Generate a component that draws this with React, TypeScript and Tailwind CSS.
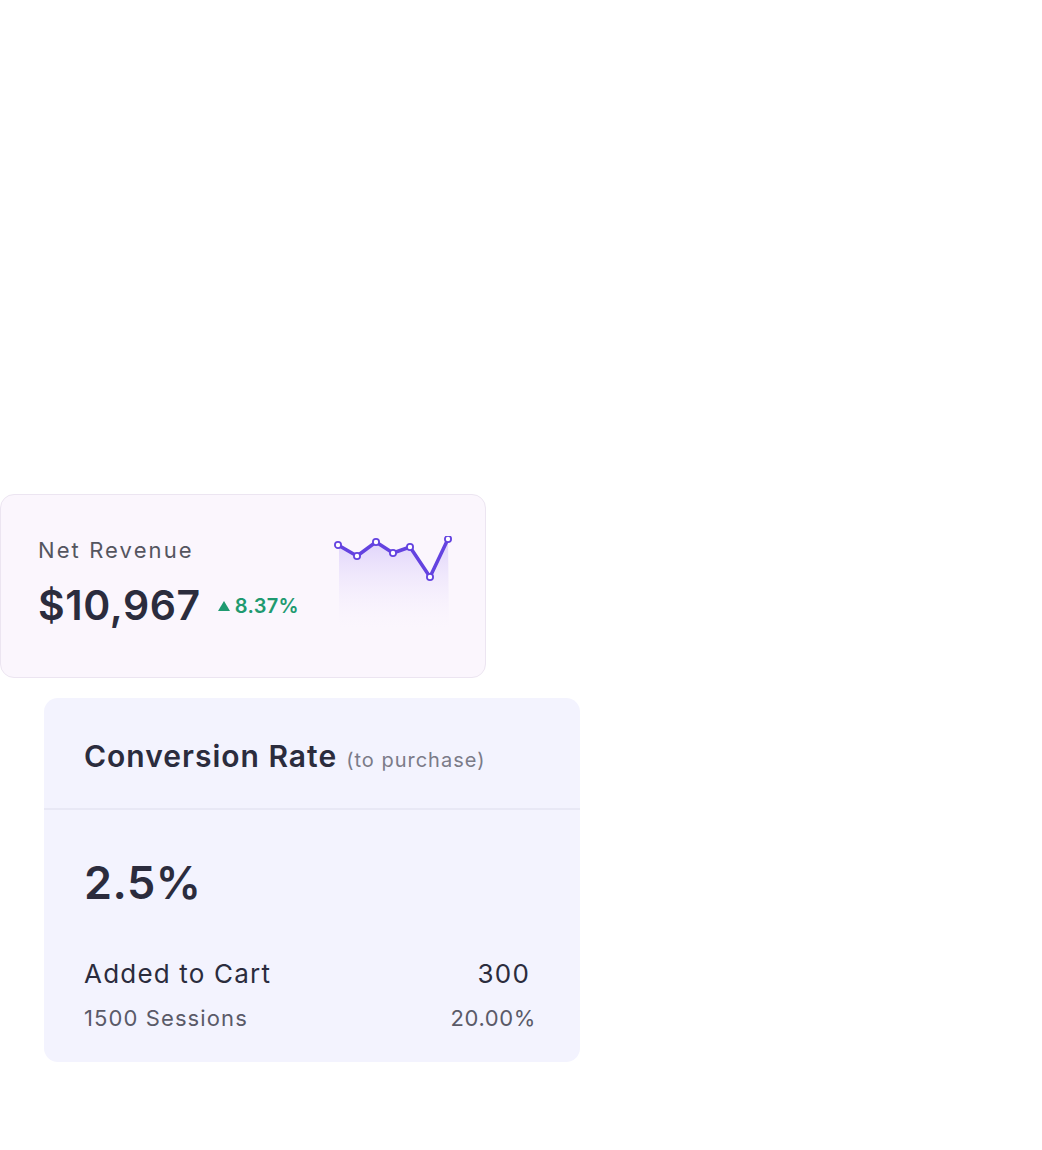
import React from "react";

const points: [number, number][] = [
  [5, 9],
  [24, 20],
  [43, 6],
  [60, 17],
  [77, 11],
  [97, 41],
  [115, 3],
];

function Sparkline() {
  const line = points.map(([x, y], i) => `${i === 0 ? "M" : "L"}${x} ${y}`).join(" ");
  const area = `M6 9 ${points.map(([x, y]) => `L${x} ${y}`).join(" ")} L116 92 L6 92 Z`;
  return (
    <svg width="122" height="92" viewBox="0 0 122 92" className="shrink-0">
      <defs>
        <linearGradient id="spark-fill" x1="0" y1="0" x2="0" y2="1">
          <stop offset="0%" stopColor="#ddd0fa" stopOpacity="0.95" />
          <stop offset="100%" stopColor="#f5effd" stopOpacity="0" />
        </linearGradient>
      </defs>
      <path d={area} fill="url(#spark-fill)" />
      <path d={line} fill="none" stroke="#6443e0" strokeWidth="3.5" strokeLinejoin="round" strokeLinecap="round" />
      {points.map(([x, y]) => (
        <circle key={x} cx={x} cy={y} r="3.1" fill="#fff" stroke="#6443e0" strokeWidth="1.8" />
      ))}
    </svg>
  );
}

export default function App() {
  return (
    <div
      className="min-h-[1150px] w-[1042px] bg-white pt-[494px] text-[#2b2c3d]"
      style={{ fontFamily: "Inter, 'Noto Sans', sans-serif" }}
    >
      <div className="flex w-[486px] h-[184px] items-start justify-between rounded-[14px] border border-[#ece5f1] bg-[#fbf6fd] pl-[37px] pr-[30px] pt-[40px]">
        <div className="flex flex-col">
          <span className="text-[22px] leading-[30px] tracking-[2.1px] text-[#55555f]">Net Revenue</span>
          <div className="mt-[16px] flex items-center gap-[16px]">
            <span className="text-[41px] font-semibold leading-[48px] tracking-[0.6px]">$10,967</span>
            <span className="mt-[2px] flex items-center gap-[4px] text-[20px] font-semibold tracking-[0.3px] text-[#1f9a70]">
              <svg width="14" height="12" viewBox="0 0 14 12">
                <path d="M7 1 L13 11 L1 11 Z" fill="#1f9a70" />
              </svg>
              8.37%
            </span>
          </div>
        </div>
        <div className="mt-[1px]">
          <Sparkline />
        </div>
      </div>

      <div className="ml-[44px] mt-[20px] w-[536px] h-[364px] rounded-[14px] bg-[#f3f3fe]">
        <div className="flex h-[112px] items-baseline gap-[9px] border-b-2 border-[#e8e8f5] px-[40px] pt-[36px]">
          <span className="text-[30px] font-semibold tracking-[1px]">Conversion Rate</span>
          <span className="text-[20px] tracking-[1px] text-[#7b7b88]">(to purchase)</span>
        </div>
        <div className="px-[40px] pt-[45px]">
          <div className="text-[45px] font-semibold leading-[56px] tracking-[0.5px]">2.5%</div>
          <div className="mt-[46px] flex items-center justify-between">
            <span className="text-[26px] leading-[34px] tracking-[1.2px]">Added to Cart</span>
            <span className="pr-[10px] text-[26px] leading-[34px] tracking-[1.2px]">300</span>
          </div>
          <div className="mt-[12px] flex items-center justify-between">
            <span className="text-[22px] leading-[30px] tracking-[1.1px] text-[#5a5a68]">1500 Sessions</span>
            <span className="pr-[4px] text-[22px] leading-[30px] tracking-[0.6px] text-[#5a5a68]">20.00%</span>
          </div>
        </div>
      </div>
    </div>
  );
}
